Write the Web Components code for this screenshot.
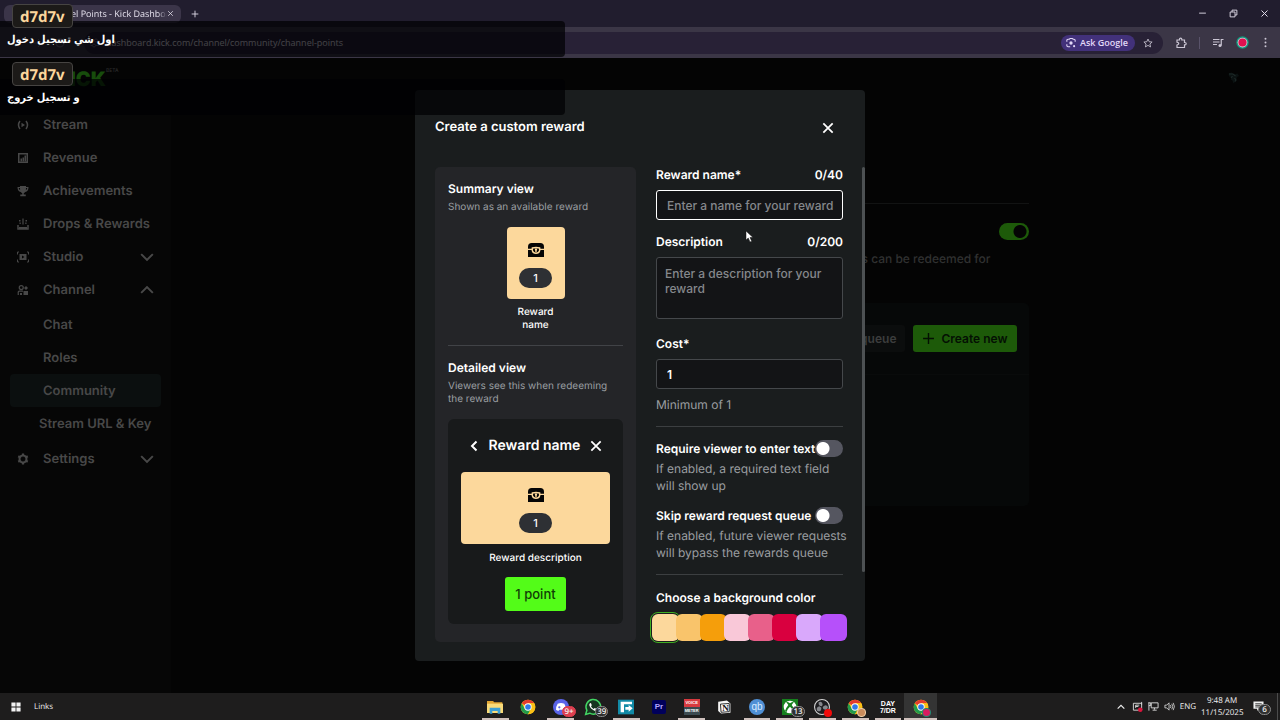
<!DOCTYPE html>
<html lang="en">
<head>
<meta charset="utf-8">
<title>Channel Points - Kick Dashboard</title>
<style>
  html, body { height: 100%; }
  body {
    margin: 0;
    display: flex;
    flex-direction: column;
    position: relative;
    overflow: hidden;
    background: #040404;
    color: #fff;
    font-family: Inter, "Liberation Sans", sans-serif;
    font-size: 12px;
    text-rendering: geometricPrecision;
    --ui-font: "Open Sans", "Noto Sans", sans-serif;
    --surface: #1a1d1e;
    --panel: #242528;
    --field: #131416;
    --line: #45484b;
    --muted: #9a9ea1;
    --green: #53fc18;
    --cream: #fcd89c;
  }
</style>
</head>
<body>
<browser-tabs></browser-tabs>
<browser-toolbar></browser-toolbar>
<channel-page>
  <side-nav slot="nav">
    <nav-item icon="stream">Stream</nav-item>
    <nav-item icon="revenue">Revenue</nav-item>
    <nav-item icon="trophy">Achievements</nav-item>
    <nav-item icon="drops">Drops &amp; Rewards</nav-item>
    <nav-item icon="studio" arrow="down">Studio</nav-item>
    <nav-item icon="channel" arrow="up">Channel</nav-item>
    <nav-item slot="sub">Chat</nav-item>
    <nav-item slot="sub">Roles</nav-item>
    <nav-item slot="sub" active>Community</nav-item>
    <nav-item slot="sub" wide>Stream URL &amp; Key</nav-item>
    <nav-item slot="end" icon="gear" arrow="down">Settings</nav-item>
  </side-nav>
  <reward-dialog slot="dialog">
    <reward-preview slot="preview"></reward-preview>
    <reward-form slot="form"></reward-form>
  </reward-dialog>
</channel-page>
<task-bar></task-bar>
<chat-feed>
  <chat-line user="d7d7v">اول شي تسجيل دخول</chat-line>
  <chat-line user="d7d7v">و تسجيل خروج</chat-line>
</chat-feed>
<mouse-pointer></mouse-pointer>

<script>
const chromeLogo = `
  <circle cx="12" cy="12" r="11" fill="#fbc116"/>
  <path d="M12 12 2.5 6.5A11 11 0 0 1 21.5 6.5H12z" fill="#e33b2e"/>
  <path d="M2.5 6.5A11 11 0 0 0 12 23l4.8-8.3L12 12 7.2 14.7z" fill="#229a4b"/>
  <path d="M12 6.5h9.5A11 11 0 0 1 12 23l4.8-8.2z" fill="#fbc116"/>
  <circle cx="12" cy="12" r="5.5" fill="#fff"/>
  <circle cx="12" cy="12" r="4.2" fill="#3079e8"/>`;

const icons = {
  close: '<path d="M4 4l16 16M20 4L4 20" fill="none" stroke="currentColor" stroke-width="3"/>',
  thinClose: '<path d="M4 4l16 16M20 4L4 20" fill="none" stroke="currentColor" stroke-width="2.6"/>',
  plus: '<path d="M12 2v20M2 12h20" fill="none" stroke="currentColor" stroke-width="2.6"/>',
  minimize: '<path d="M3 11h18" stroke="currentColor" stroke-width="2.4"/>',
  restore: '<path d="M3 8h13v13H3zM8 8V3h13v13h-5" fill="none" stroke="currentColor" stroke-width="2.4"/>',
  down: '<path d="M2 7l10 10L22 7" fill="none" stroke="currentColor" stroke-width="3.4"/>',
  up: '<path d="M2 17L12 7l10 10" fill="none" stroke="currentColor" stroke-width="3.4"/>',
  back: '<path d="M17 3l-9 9 9 9" fill="none" stroke="currentColor" stroke-width="4"/>',
  arrowBack: '<path d="M21 12H4M12 4l-8 8 8 8" fill="none" stroke="currentColor" stroke-width="2"/>',
  arrowNext: '<path d="M3 12h17M12 4l8 8-8 8" fill="none" stroke="currentColor" stroke-width="2"/>',
  reload: '<path d="M20 12a8 8 0 1 1-2.5-6M20 2v6h-6" fill="none" stroke="currentColor" stroke-width="2.4"/>',
  site: '<path d="M3 7h8M17 7h4M3 17h4M13 17h8" stroke="currentColor" stroke-width="2"/><circle cx="14" cy="7" r="3" fill="none" stroke="currentColor" stroke-width="2"/><circle cx="10" cy="17" r="3" fill="none" stroke="currentColor" stroke-width="2"/>',
  lens: '<path d="M2 9V6q0-3 3-3h3l2-2h5l2 2h2q3 0 3 3v3M2 15v3q0 3 3 3h5" fill="none" stroke="currentColor" stroke-width="2.6"/><circle cx="12" cy="12" r="4" fill="currentColor"/><circle cx="19.5" cy="19.5" r="2.5" fill="currentColor"/>',
  star: '<path d="M12 2.5l2.9 6.5 7 .7-5.3 4.7 1.6 7L12 17.7 5.8 21.4l1.6-7L2.1 9.7l7-.7z" fill="none" stroke="currentColor" stroke-width="2"/>',
  puzzle: '<path d="M4 6h5V4.5a2.3 2.3 0 0 1 4.6 0V6H19v5h1a2.3 2.3 0 0 1 0 4.6h-1V21H4v-5q3.5-.5 3.5-2.8T4 10.5z" fill="none" stroke="currentColor" stroke-width="2.4"/>',
  playlist: '<path d="M2 5h13M2 10h13M2 15h8M18.5 17V5H23" fill="none" stroke="currentColor" stroke-width="2.4"/><circle cx="16" cy="17" r="3" fill="currentColor"/>',
  dots: '<circle cx="12" cy="2" r="2.6" fill="currentColor"/><circle cx="12" cy="12" r="2.6" fill="currentColor"/><circle cx="12" cy="22" r="2.6" fill="currentColor"/>',
  account: '<circle cx="12" cy="12" r="11.5" fill="#13957c"/><circle cx="12" cy="12" r="9" fill="#cfd8dc"/><circle cx="12" cy="12" r="7.5" fill="#df1150"/>',
  stream: '<path d="M6 4Q0 12 6 20M18 4q6 8 0 16" fill="none" stroke="currentColor" stroke-width="3"/><path d="M9 7.5l7 4.5-7 4.5z" fill="currentColor"/>',
  revenue: '<path fill-rule="evenodd" d="M2 2h20v20H2zm3 3v14h14V5z" fill="currentColor"/><path d="M7 19v-6h3v6M11 19v-8h3v8M15 19V7h3v12" fill="currentColor"/>',
  trophy: '<path fill-rule="evenodd" d="M6 2h12v2h5q0 9-6.5 10-1.5 2-3 2.5V19h4v3.5H6.5V19h4v-2.5q-1.5-.5-3-2.5Q1 13 1 4h5zM3.5 6q.4 3 2.7 4.5L6 6zm17 0H18l-.2 4.5Q20.1 9 20.5 6z" fill="currentColor"/>',
  drops: '<path d="M2 14v8h20v-8" fill="none" stroke="currentColor" stroke-width="3"/><path d="M4 18h16v4H4zM10.8 1h2.4v12h-2.4zM4 4h3v3H4zm13 0h3v3h-3zM5 9h2.5v3H5zm11.5 0H19v3h-2.5z" fill="currentColor"/>',
  studio: '<path fill-rule="evenodd" d="M5 6h14v12H5zm5 3v6l5-3z" fill="currentColor"/><path d="M1 7V2h3M20 2h3v5M1 17v5h3M20 22h3v-5" fill="none" stroke="currentColor" stroke-width="2"/>',
  channel: '<circle cx="8.5" cy="7" r="4" fill="none" stroke="currentColor" stroke-width="2.5"/><path d="M2.5 22v-6q0-2 2-2H12" fill="none" stroke="currentColor" stroke-width="2.5"/><path d="M18 4l4 4-4 4-4-4zM13 14h9v8h-9zM6 18h4v4H6z" fill="currentColor"/>',
  gear: '<path d="M12 5a7 7 0 1 0 .01 0" fill="none" stroke="currentColor" stroke-width="4"/><path d="M12 1v4M12 19v4M2.5 6.5L6 8.5M18 15.5l3.5 2M2.5 17.5l3.5-2M18 8.5l3.5-2" stroke="currentColor" stroke-width="4.5"/>',
  chest: '<path d="M0 10V7q0-5.5 5.5-5.5h13Q24 1.5 24 7v15.5H0z" fill="#050505"/><path d="M0 11h6M18 11h6" stroke="#fcd89c" stroke-width="2"/><path d="M6.5 9q5.5-1.5 11 0v4q-1 4-5.5 4t-5.5-4z" fill="none" stroke="#fcd89c" stroke-width="2.2"/><path d="M12 9.5a2 2 0 0 0-1 3.5v2h2v-2a2 2 0 0 0-1-3.5z" fill="#fcd89c"/>',
  start: '<path d="M1 1h10v10H1zM13 1h10v10H13zM1 13h10v10H1zM13 13h10v10H13z" fill="#f2f2f2"/>',
  explorer: '<path d="M0 3h9l2 2h12v5H0z" fill="#e2a633"/><path d="M0 7h24v14H0z" fill="#fadb79"/><path d="M4 13h16v9h-4v-4H8v4H4z" fill="#3c9fd4"/>',
  chrome: chromeLogo,
  discord: '<circle cx="12" cy="12" r="12" fill="#5a64e8"/><path d="M7 7q5-2 10 0 3 5 2.5 9-2 2-4 1.5l-1-1.5h-5l-1 1.5q-2 .5-4-1.5Q4 12 7 7z" fill="#fff"/><circle cx="9.5" cy="12.5" r="1.7" fill="#5a64e8"/>',
  whatsapp: '<path d="M1 23l1.8-6A11 11 0 1 1 7 21.3z" fill="#16351f" stroke="#43d564" stroke-width="2.2"/><path d="M8 6q-2 1-1.5 3.5Q8 15 14 17.5q3 .5 3.5-2.5l-3-1.5-1.5 1.5q-3-1.5-4-4l1.2-1.5L9 6.2z" fill="#fff"/>',
  flow: '<path d="M0 1h24v22H0z" fill="#128aa6"/><path d="M4 4h17v4H9v12H4z" fill="#fff"/><path d="M11 12h5V9l6 5-6 5v-3h-5z" fill="#fff"/>',
  cube: '<path d="M2 3l15-2 6 5v16L7 23l-5-4z" fill="#f5f5f5"/><path d="M6 7l15-1v14L7 21z" fill="#fff" stroke="#111" stroke-width="1.5"/>',
  xbox: '<path d="M0 0h24v24H0z" fill="#16801d"/><circle cx="12" cy="12" r="9.5" fill="#fff"/><path d="M6 4q4 0 6 2.5Q14 4 18 4l-3.5 5q4 5 5 9l-2 2q-1-5-5.500-8.500Q7.500 15 6.500 20l-2-2q1-4 5-9z" fill="#16801d"/>',
  obs: '<circle cx="12" cy="12" r="11.2" fill="#1d1d20" stroke="#d4d4d4" stroke-width="1.6"/><path d="M12 11Q6 11 7 5q5-3 6 3zM13 12q5-5 8 0-1 6-7 3zM11 13q0 7-6 5-3-5 3-7z" fill="#85878c"/>',
  tray: '<path d="M3 5h18v15H3z" fill="none" stroke="#ddd" stroke-width="2"/><path d="M8 9h8M8 12h6M8 15V9M21 2v6" stroke="#ddd" stroke-width="2"/><circle cx="18" cy="19" r="5" fill="#dc143c"/>',
  network: '<path d="M7 4h15v11H7zM14 15v4M10 20h9M2 3v18M2 10h4V4H1" fill="none" stroke="#ddd" stroke-width="2"/>',
  speaker: '<path d="M2 9h4l5-5v16l-5-5H2z" fill="none" stroke="#ddd" stroke-width="1.8"/><path d="M14 9q2 3 0 6M17 6q4 6 0 12M20 4q5.5 8 0 16" fill="none" stroke="#ddd" stroke-width="1.8"/>',
  notice: '<path d="M1 1h22v16H13l-4 5v-5H1z" fill="#f0f0f0"/><path d="M5 6h14M5 9.5h14M5 13h9" stroke="#222" stroke-width="1.8"/>',
  avatar: '<path d="M1 3l6-2 5 4 7-2 3 5-4 2-2 7-5 6-2-6-4-2 2-5-5-1z" fill="#0b1212"/><path d="M2 4l8 0 5 4M9 8l-3 4M13 12l3 4-2 3" fill="none" stroke="#1d2827" stroke-width="2.4"/>',
  pointer: '<path d="M2 0v18l4.5-4 3.5 8 3.5-1.5L10 13h6z" fill="#fff" stroke="#111" stroke-width="1"/>'
};

function define(name, html, setup) {
  customElements.define(name, class extends HTMLElement {
    constructor() {
      super();
      this.attachShadow({ mode: 'open' });
    }

    connectedCallback() {
      this.shadowRoot.innerHTML = html;
      if (setup) setup(this, this.shadowRoot);
    }
  });
}

define('ui-icon', `
  <style>
    :host { display: inline-flex; flex: none; width: 12px; height: 12px; }
    svg { width: 100%; height: 100%; overflow: visible; }
  </style>
  <svg viewBox="0 0 24 24" aria-hidden="true"></svg>`, function (host, root) {
  root.querySelector('svg').innerHTML = icons[host.getAttribute('name')] || '';
});

define('browser-tabs', `
  <style>
    :host {
      display: flex;
      align-items: center;
      height: 27px;
      background: #211d2e;
      font: 9px/16px var(--ui-font);
      color: #e4e0ec;
    }
    .tab {
      display: flex;
      align-items: center;
      box-sizing: border-box;
      width: 177px;
      height: 18px;
      margin-left: 4px;
      padding: 0 7px 0 67px;
      border-radius: 6px;
      background: #3b3549;
    }
    .name {
      flex: 1;
      min-width: 0;
      white-space: nowrap;
      -webkit-mask-image: linear-gradient(90deg, #000 90%, transparent);
      mask-image: linear-gradient(90deg, #000 90%, transparent);
    }
    button { display: flex; padding: 0; border: 0; background: none; color: inherit; }
    .tab ui-icon { width: 7px; height: 7px; }
    .add { margin-left: 10px; }
    .add ui-icon { width: 8px; height: 8px; }
    .window { display: flex; gap: 22px; margin-left: auto; margin-right: 11px; }
    .window ui-icon { width: 9px; height: 9px; }
  </style>
  <div class="tab">
    <span class="name">el Points - Kick Dashboar</span>
    <button aria-label="Close tab"><ui-icon name="thinClose"></ui-icon></button>
  </div>
  <button class="add" aria-label="New tab"><ui-icon name="plus"></ui-icon></button>
  <div class="window">
    <button aria-label="Minimize"><ui-icon name="minimize"></ui-icon></button>
    <button aria-label="Restore"><ui-icon name="restore"></ui-icon></button>
    <button aria-label="Close"><ui-icon name="thinClose"></ui-icon></button>
  </div>`);

define('browser-toolbar', `
  <style>
    :host {
      display: flex;
      align-items: center;
      box-sizing: border-box;
      height: 31px;
      padding: 0 10px;
      background: #3b3646;
      color: #cbc6d4;
      font: 9px/16px var(--ui-font);
    }
    button { display: flex; align-items: center; padding: 0; border: 0; background: none; color: inherit; font: inherit; }
    .nav { display: flex; gap: 10px; width: 74px; color: #6d687a; }
    .address {
      flex: 1;
      display: flex;
      align-items: center;
      gap: 5px;
      height: 22px;
      padding: 0 10px 0 5px;
      border-radius: 11px;
      background: #282136;
    }
    .address > ui-icon { color: #6d687a; }
    input { flex: 1; min-width: 0; padding: 0; border: 0; background: none; color: #f0eef5; font: inherit; }
    .ask {
      gap: 4px;
      height: 16px;
      padding: 0 7px 0 5px;
      margin-right: 3px;
      border-radius: 8px;
      background: #42317a;
      color: #e3d9f8;
      font-weight: 600;
    }
    .ask ui-icon, .address > button ui-icon { width: 10px; height: 10px; }
    .tools { display: flex; align-items: center; gap: 12px; padding-left: 12px; }
    .tools .sep { width: 1px; height: 12px; background: #59536a; }
    .account ui-icon { width: 13px; height: 13px; }
    .more ui-icon { width: 9px; height: 9px; }
  </style>
  <div class="nav">
    <button aria-label="Back"><ui-icon name="arrowBack"></ui-icon></button>
    <button aria-label="Forward"><ui-icon name="arrowNext"></ui-icon></button>
    <button aria-label="Reload"><ui-icon name="reload"></ui-icon></button>
  </div>
  <div class="address">
    <ui-icon name="site"></ui-icon>
    <input aria-label="Address" value="dashboard.kick.com/channel/community/channel-points">
    <button class="ask"><ui-icon name="lens"></ui-icon>Ask Google</button>
    <button aria-label="Bookmark"><ui-icon name="star"></ui-icon></button>
  </div>
  <div class="tools">
    <button aria-label="Extensions"><ui-icon name="puzzle"></ui-icon></button>
    <span class="sep"></span>
    <button aria-label="Media"><ui-icon name="playlist"></ui-icon></button>
    <button class="account" aria-label="Account"><ui-icon name="account"></ui-icon></button>
    <button class="more" aria-label="Menu"><ui-icon name="dots"></ui-icon></button>
  </div>`);

define('nav-item', `
  <style>
    :host { display: block; }
    a {
      display: flex;
      align-items: center;
      gap: 14px;
      height: 33px;
      padding: 0 7px;
      border-radius: 4px;
      color: #484848;
      font-size: 13px;
      font-weight: 600;
      text-decoration: none;
      white-space: nowrap;
    }
    :host([active]) a { background: #0b0f0f; }
    :host([wide]) a { gap: 10px; }
    .arrow { width: 14px; height: 14px; margin-left: auto; }
    .arrow:not([name]) { display: none; }
  </style>
  <a href="#"><ui-icon class="mark"></ui-icon><slot></slot><ui-icon class="arrow"></ui-icon></a>`, function (host, root) {
  const mark = document.createElement('ui-icon');
  mark.setAttribute('name', host.getAttribute('icon') || '');
  root.querySelector('.mark').replaceWith(mark);
  if (host.hasAttribute('arrow')) {
    const arrow = document.createElement('ui-icon');
    arrow.className = 'arrow';
    arrow.setAttribute('name', host.getAttribute('arrow'));
    root.querySelector('.arrow').replaceWith(arrow);
  }
});

define('side-nav', `
  <style>
    :host { display: block; padding: 10px; background: #060606; }
    .sub { padding: 2px 0; }
  </style>
  <nav>
    <slot></slot>
    <div class="sub"><slot name="sub"></slot></div>
    <slot name="end"></slot>
  </nav>`);

define('channel-page', `
  <style>
    :host { flex: 1; min-height: 0; display: flex; flex-direction: column; position: relative; }
    header {
      display: flex;
      align-items: center;
      justify-content: space-between;
      height: 40px;
      padding: 0 40px 0 70px;
    }
    .logo { display: flex; align-items: flex-start; padding-top: 2px; color: #174c0c; font-size: 20px; font-weight: 900; line-height: 22px; text-decoration: none; }
    .logo small { color: #2d2d2d; font-size: 5px; line-height: 7px; font-weight: 500; }
    .columns { flex: 1; display: grid; grid-template-columns: 171px 1fr; }
    main { box-sizing: border-box; width: 100%; max-width: 606px; margin: 0 auto; padding-top: 105px; }
    .intro { border-top: 1px solid #121313; padding: 19px 0 35px; }
    .switch {
      appearance: none;
      display: block;
      width: 30px;
      height: 17px;
      margin: 0 0 0 auto;
      border-radius: 9px;
      background: radial-gradient(circle at 21px 50%, #040404 6px, #1d5a09 7px);
    }
    p { margin: 9px 38px 0 0; color: #303131; font-weight: 500; font-size: 12px; line-height: 19px; text-align: right; }
    .card { height: 203px; border-radius: 5px; background: #060808; }
    .actions {
      display: flex;
      justify-content: flex-end;
      gap: 8px;
      padding: 22px 12px;
      border-bottom: 1px solid #090b0b;
    }
    button {
      display: flex;
      align-items: center;
      gap: 6px;
      height: 27px;
      padding: 0 9px;
      border: 0;
      border-radius: 3px;
      background: #0b0d0d;
      color: #3c3d3d;
      font-family: inherit;
      font-size: 12px;
      font-weight: 600;
    }
    button.create { background: #1d5a09; color: #041003; }
    .create ui-icon { width: 13px; height: 13px; }
    .cover { position: absolute; inset: 0; display: grid; place-items: center; }
  </style>
  <header>
    <a class="logo" href="#" aria-label="Kick">ICK<small>BETA</small></a>
    <ui-icon name="avatar"></ui-icon>
  </header>
  <div class="columns">
    <slot name="nav"></slot>
    <main>
      <section class="intro">
        <input class="switch" type="checkbox" checked aria-label="Channel points">
        <p>s can be redeemed for</p>
      </section>
      <section class="card">
        <div class="actions">
          <button>queue</button>
          <button class="create"><ui-icon name="plus"></ui-icon>Create new</button>
        </div>
      </section>
    </main>
  </div>
  <div class="cover"><slot name="dialog"></slot></div>`);

define('reward-dialog', `
  <style>
    :host {
      display: block;
      position: relative;
      box-sizing: border-box;
      width: 450px;
      padding: 20px 22px 19px 20px;
      border-radius: 4px;
      background: var(--surface);
    }
    header { display: flex; align-items: center; justify-content: space-between; padding: 8px 8px 30px 0; }
    h1 { margin: 0; font-size: 13px; line-height: 19px; font-weight: 600; }
    button { display: flex; padding: 0; border: 0; background: none; color: #fff; }
    ui-icon { width: 14px; height: 14px; }
    .body { display: grid; grid-template-columns: 201px minmax(0, 1fr); gap: 20px; }
    .thumb { position: absolute; top: 77px; right: 0; width: 3px; bottom: 89px; background: #4d5153; border-radius: 2px; }
  </style>
  <div role="dialog" aria-label="Create a custom reward">
    <header>
      <h1>Create a custom reward</h1>
      <button aria-label="Close"><ui-icon name="close"></ui-icon></button>
    </header>
    <div class="body">
      <slot name="preview"></slot>
      <slot name="form"></slot>
    </div>
    <div class="thumb"></div>
  </div>`);

define('reward-tile', `
  <style>
    :host {
      display: flex;
      flex-direction: column;
      align-items: center;
      justify-content: center;
      gap: 10px;
      box-sizing: border-box;
      height: 72px;
      padding-top: 4px;
      border-radius: 4px;
      background: var(--cream);
    }
    ui-icon { width: 16px; height: 16px; }
    span { width: 33px; border-radius: 10px; background: #2e3034; font-size: 11px; line-height: 20px; font-weight: 500; text-align: center; }
  </style>
  <ui-icon name="chest"></ui-icon>
  <span><slot></slot></span>`);

define('reward-preview', `
  <style>
    :host { display: block; padding: 13px 13px 18px; border-radius: 5px; background: var(--panel); }
    h2 { margin: 0 0 4px; font-size: 12px; line-height: 17px; font-weight: 600; }
    p { margin: 0 0 13px; color: var(--muted); font-size: 10px; line-height: 13px; }
    .summary { display: flex; flex-direction: column; gap: 7px; width: 58px; margin: 0 auto 13px; font-size: 10px; line-height: 13px; text-align: center; font-weight: 500; }
    hr { height: 1px; margin: 0 0 13px; border: 0; background: #414347; }
    .detail { padding: 13px; border-radius: 6px; background: #181a1b; text-align: center; }
    .head { display: flex; align-items: center; justify-content: space-between; height: 27px; margin-bottom: 13px; padding: 0 7px; font-size: 14px; font-weight: 600; }
    .head button { display: flex; padding: 0; border: 0; background: none; color: #fff; }
    .head button + button ui-icon, .head button:last-child ui-icon { width: 14px; height: 14px; }
    .text { margin: 8px 0 12px; font-size: 10px; line-height: 13px; font-weight: 500; }
    .buy { display: block; height: 34px; margin: 0 auto; padding: 0 10px; border: 0; border-radius: 3px; background: var(--green); color: #103d06; font-family: inherit; font-size: 13px; font-weight: 500; }
  </style>
  <h2>Summary view</h2>
  <p>Shown as an available reward</p>
  <div class="summary"><reward-tile>1</reward-tile>Reward name</div>
  <hr>
  <h2>Detailed view</h2>
  <p>Viewers see this when redeeming the reward</p>
  <div class="detail">
    <div class="head">
      <button aria-label="Back"><ui-icon name="back"></ui-icon></button>
      Reward name
      <button aria-label="Close"><ui-icon name="close"></ui-icon></button>
    </div>
    <reward-tile>1</reward-tile>
    <div class="text">Reward description</div>
    <button class="buy">1 point</button>
  </div>`);

define('reward-form', `
  <style>
    :host { display: block; font-size: 12px; line-height: 16px; }
    form { display: flex; flex-direction: column; }
    .row { display: flex; align-items: center; justify-content: space-between; margin: 14px 0 7px; font-weight: 600; }
    .row:first-child { margin-top: 0; }
    label, legend { font-weight: 600; white-space: nowrap; }
    input[type=text], textarea {
      box-sizing: border-box;
      width: 100%;
      margin: 0;
      border: 1px solid var(--line);
      border-radius: 3px;
      background: var(--field);
      color: #fff;
      font-family: inherit;
      font-size: 12px;
      font-weight: 500;
      line-height: 15px;
      outline: 0;
    }
    input[type=text] { height: 30px; padding: 0 8px 0 10px; }
    input#name { border-color: #fff; }
    input#cost { font-weight: 600; }
    textarea { display: block; height: 62px; margin-bottom: 3px; padding: 8px; resize: none; overflow: hidden; }
    ::placeholder { color: #85888c; opacity: 1; }
    p { margin: 3px -6px 0 0; color: var(--muted); line-height: 17px; }
    .hint { margin-top: 7px; }
    hr { width: 100%; height: 1px; margin: 13px 0 0; border: 0; background: #3c3f41; }
    .option { display: flex; align-items: center; justify-content: space-between; height: 17px; margin-top: 13px; }
    .switch {
      appearance: none;
      flex: none;
      width: 28px;
      height: 17px;
      margin: 0;
      border-radius: 9px;
      background: radial-gradient(circle at 8px 50%, #fff 6px, #555660 7px);
    }
    fieldset { min-width: 0; margin: 15px 0 0; padding: 0; border: 0; }
    legend { padding: 0; }
    .colors { display: flex; justify-content: center; margin-top: 8px; }
    .colors input {
      appearance: none;
      flex: none;
      width: 27px;
      height: 27px;
      margin: 0 -1px 0 -2px;
      border-radius: 6px;
    }
    .colors input:checked { outline: 1px solid #3fae21; outline-offset: 1px; }
  </style>
  <form>
    <div class="row"><label for="name">Reward name*</label><span>0/40</span></div>
    <input id="name" type="text" placeholder="Enter a name for your reward">
    <div class="row"><label for="description">Description</label><span>0/200</span></div>
    <textarea id="description" placeholder="Enter a description for your reward"></textarea>
    <div class="row"><label for="cost">Cost*</label></div>
    <input id="cost" type="text" inputmode="numeric" value="1">
    <p class="hint">Minimum of 1</p>
    <hr>
    <div class="option"><label for="require">Require viewer to enter text</label><input class="switch" id="require" type="checkbox"></div>
    <p>If enabled, a required text field will show up</p>
    <div class="option"><label for="skip">Skip reward request queue</label><input class="switch" id="skip" type="checkbox"></div>
    <p>If enabled, future viewer requests will bypass the rewards queue</p>
    <hr>
    <fieldset>
      <legend>Choose a background color</legend>
      <div class="colors"></div>
    </fieldset>
  </form>`, function (host, root) {
  const colors = ['#fcd89c', '#f9c46b', '#f59e0b', '#f9c8d8', '#e8608a', '#d9003f', '#d9a8fb', '#b650fa'];
  colors.forEach(function (color, i) {
    const input = document.createElement('input');
    input.type = 'radio';
    input.name = 'color';
    input.checked = i === 0;
    input.setAttribute('aria-label', color);
    input.style.background = color;
    root.querySelector('.colors').append(input);
  });
});

define('task-app', `
  <style>
    :host { display: flex; align-items: center; justify-content: center; position: relative; box-sizing: border-box; }
    :host([open])::after { content: ""; position: absolute; left: 3px; right: 3px; bottom: 0; height: 2px; background: #cfc1bd; }
    :host([active]) { background: #343434; }
    :host([active])::after { left: 0; right: 0; }
    button { display: flex; padding: 0; border: 0; background: none; }
    ::slotted(ui-icon) { width: 16px; height: 16px; }
    .badge { position: absolute; left: 18px; bottom: 3px; }
  </style>
  <button><slot></slot></button>
  <span class="badge"><slot name="badge"></slot></span>`, function (host, root) {
  root.querySelector('button').setAttribute('aria-label', host.title);
});

define('task-bar', `
  <style>
    :host { display: flex; align-items: stretch; height: 27px; background: #1e1d1d; color: #f0f0f0; font: 8px/12px var(--ui-font); }
    .left { flex: 0 0 479px; display: flex; align-items: center; gap: 13px; padding-left: 11px; box-sizing: border-box; }
    .left ui-icon { width: 10px; height: 10px; }
    .left button { display: flex; padding: 0; border: 0; background: none; }
    .apps { flex: 0 0 458px; display: grid; grid-template-columns: repeat(14, 1fr); }
    .count { display: block; min-width: 9px; padding: 0 1px; border: 1px solid #8b8b8b; border-radius: 7px; background: #303030; font-size: 8px; line-height: 9px; font-weight: 600; text-align: center; }
    .red { border-color: #dd3f50; background: #dd3f50; }
    .dot { display: block; width: 8px; height: 8px; border-radius: 4px; background: #f00a0a; }
    .dot.pink { background: #d81b60; border: 1px solid #188c73; width: 7px; height: 7px; }
    .dot.tan { background: #c98c5c; border: 1px solid #f0cfa8; width: 7px; height: 7px; }
    .pr { width: 14px; border-radius: 2px; background: #00005b; color: #b3a4ff; font-size: 8px; line-height: 14px; font-weight: 600; }
    .voice { width: 16px; background: linear-gradient(#d73a3f 50%, #3c4a50 50%); color: #fff; font-size: 4px; line-height: 8px; font-weight: 700; }
    .day { color: #fff; font-size: 7px; line-height: 7px; font-weight: 800; }
    .qb { width: 16px; border-radius: 8px; background: #4f8fd4; color: #d8ecff; font-size: 10px; line-height: 16px; }
    .n { position: relative; display: flex; }
    .n ui-icon { width: 14px; height: 14px; }
    .n b { position: absolute; left: 5px; top: 1px; color: #111; font: 700 9px/14px "Liberation Serif", serif; }
    .tray { flex: 1; display: flex; align-items: center; justify-content: flex-end; gap: 5px; padding-right: 2px; }
    .tray ui-icon { width: 11px; height: 11px; }
    .tray .up { width: 8px; height: 8px; margin-right: 2px; }
    .clock { width: 42px; text-align: center; }
    .notice { position: relative; display: flex; margin: 0 8px 0 5px; }
    .notice .count { position: absolute; left: 5px; top: 3px; }
    .edge { width: 1px; height: 27px; background: #4c4c4c; }
  </style>
  <div class="left">
    <button aria-label="Start"><ui-icon name="start"></ui-icon></button>
    <span>Links</span>
  </div>
  <div class="apps">
    <task-app title="Files" open><ui-icon name="explorer"></ui-icon></task-app>
    <task-app title="Chrome"><ui-icon name="chrome"></ui-icon></task-app>
    <task-app title="Discord" open><ui-icon name="discord"></ui-icon><span slot="badge" class="count red">9+</span></task-app>
    <task-app title="WhatsApp"><ui-icon name="whatsapp"></ui-icon><span slot="badge" class="count">39</span></task-app>
    <task-app title="Flow" open><ui-icon name="flow"></ui-icon></task-app>
    <task-app title="Premiere"><span class="pr">Pr</span></task-app>
    <task-app title="Voicemeeter" open><span class="voice">VOICE<br>METER</span></task-app>
    <task-app title="Notion"><span class="n"><ui-icon name="cube"></ui-icon><b>N</b></span></task-app>
    <task-app title="qBittorrent" open><span class="qb">qb</span></task-app>
    <task-app title="Xbox" open><ui-icon name="xbox"></ui-icon><span slot="badge" class="count">13</span></task-app>
    <task-app title="OBS" open><ui-icon name="obs"></ui-icon><span slot="badge" class="dot"></span></task-app>
    <task-app title="Chrome" open><ui-icon name="chrome"></ui-icon><span slot="badge" class="dot tan"></span></task-app>
    <task-app title="DayZ" open><span class="day">DAY<br>7/DR</span></task-app>
    <task-app title="Chrome" open active><ui-icon name="chrome"></ui-icon><span slot="badge" class="dot pink"></span></task-app>
  </div>
  <div class="tray">
    <ui-icon class="up" name="up"></ui-icon>
    <ui-icon name="tray"></ui-icon>
    <ui-icon name="network"></ui-icon>
    <ui-icon name="speaker"></ui-icon>
    <span>ENG</span>
    <div class="clock">9:48 AM<br>11/15/2025</div>
    <div class="notice"><ui-icon name="notice"></ui-icon><span class="count">6</span></div>
    <span class="edge"></span>
  </div>`);

/* stream chat drawn over the top left of the desktop */
define('chat-feed', `
  <style>
    :host { position: absolute; left: 0; top: 4px; width: 565px; display: flex; flex-direction: column; gap: 6px; }
  </style>
  <slot></slot>`);

define('chat-line', `
  <style>
    :host { display: block; height: 52px; }
    .user {
      position: relative;
      z-index: 1;
      display: block;
      box-sizing: border-box;
      width: max-content;
      height: 24px;
      margin-left: 12px;
      padding: 0 7px;
      border: 1px solid #464442;
      border-radius: 4px;
      background: #1c1a18;
      color: #fbd69c;
      font: 700 15px/24px "Noto Sans", sans-serif;
    }
    .message {
      box-sizing: border-box;
      height: 36px;
      margin-top: -7px;
      padding: 10px 7px;
      border-radius: 0 4px 4px 0;
      background: rgba(0, 0, 3, .72);
      color: #fff;
      font: 700 11px/18px "Liberation Sans", "DejaVu Sans Condensed", "DejaVu Sans", sans-serif;
      text-align: left;
    }
  </style>
  <span class="user"></span>
  <div class="message" dir="rtl"><slot></slot></div>`, function (host, root) {
  root.querySelector('.user').textContent = host.getAttribute('user');
});

define('mouse-pointer', `
  <style>
    :host { position: absolute; left: 745px; top: 231px; }
    ui-icon { width: 12px; height: 12px; }
  </style>
  <ui-icon name="pointer"></ui-icon>`);
</script>
</body>
</html>
